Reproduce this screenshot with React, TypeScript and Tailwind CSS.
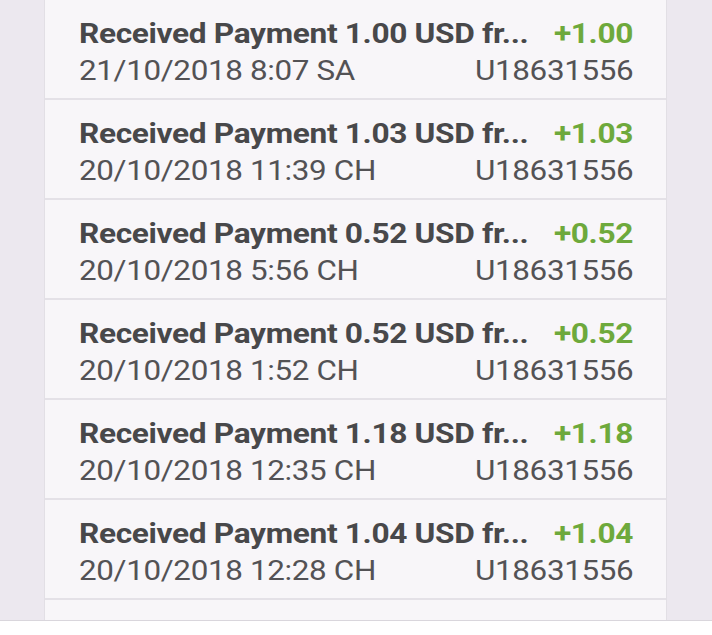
import React from "react";

const rows = [
  { amt: "1.00", date: "21/10/2018 8:07 SA" },
  { amt: "1.03", date: "20/10/2018 11:39 CH" },
  { amt: "0.52", date: "20/10/2018 5:56 CH" },
  { amt: "0.52", date: "20/10/2018 1:52 CH" },
  { amt: "1.18", date: "20/10/2018 12:35 CH" },
  { amt: "1.04", date: "20/10/2018 12:28 CH" },
];

export default function App() {
  return (
    <div
      className="w-[712px] h-[635px] overflow-hidden bg-white flex flex-col"
      style={{ fontFamily: "Roboto, 'Liberation Sans', sans-serif" }}
    >
      <div className="h-[621px] flex bg-[#ece8ef] border-b border-[#d9d6dc]">
        <div className="w-[45px] border-r border-[#e2dfe5]" />
        <div className="flex-1 bg-[#f8f6f9] flex flex-col">
          {rows.map((r, i) => (
            <div
              key={i}
              className="h-[100px] shrink-0 border-b-2 border-[#e4e1e7] pl-[34px] pr-[33px] pt-[15px]"
            >
              <div className="flex justify-between items-center h-[37px]">
                <span className="inline-block origin-left scale-x-[1.13] text-[28px] font-bold text-[#48484a] tracking-[-0.3px]">
                  Received Payment {r.amt} USD fr...
                </span>
                <span className="inline-block origin-right scale-x-[1.13] text-[28px] font-bold text-[#6ea93c] tracking-[-0.3px]">
                  +{r.amt}
                </span>
              </div>
              <div className="flex justify-between items-center h-[37px]">
                <span className="inline-block origin-left scale-x-[1.12] text-[28px] text-[#535255] tracking-[-0.3px]">
                  {r.date}
                </span>
                <span className="inline-block origin-right scale-x-[1.12] text-[28px] text-[#535255] tracking-[-0.3px]">
                  U18631556
                </span>
              </div>
            </div>
          ))}
          <div className="flex-1" />
        </div>
        <div className="w-[46px] border-l border-[#e2dfe5]" />
      </div>
    </div>
  );
}
